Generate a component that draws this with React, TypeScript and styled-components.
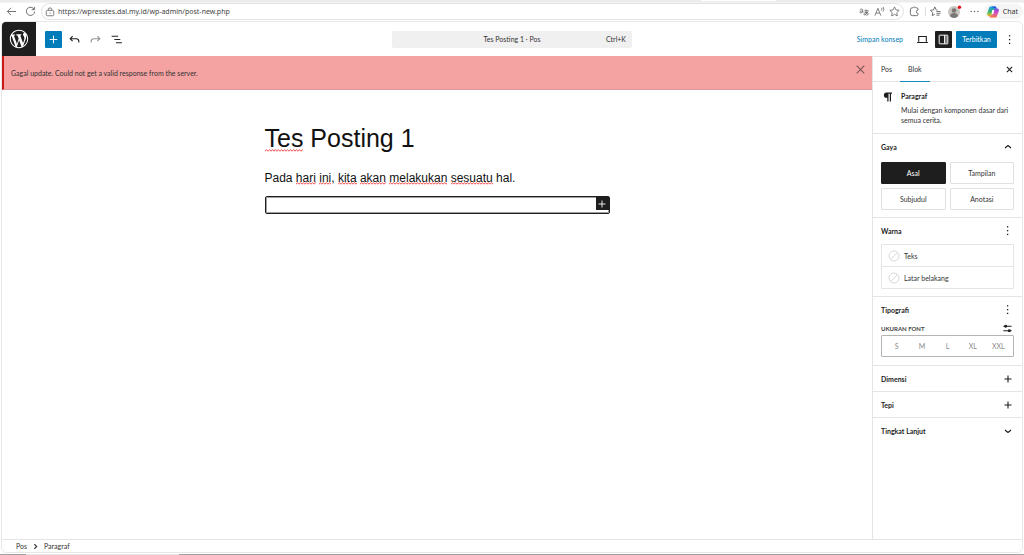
import React from "react";
import styled, { createGlobalStyle, css } from "styled-components";

const ink = "#1e1e1e";
const line = "#e4e4e4";
const blue = "#007cba";
const squiggle =
  "data:image/svg+xml,%3Csvg xmlns='http://www.w3.org/2000/svg' width='3' height='3' viewBox='0 0 3 3'%3E%3Cpath d='M-.5 2.800L1.500.6 3.500 2.800' fill='none' stroke='%23f03c3c' stroke-width='.9'/%3E%3C/svg%3E";

const GlobalStyle = createGlobalStyle`
  *, *::before, *::after { box-sizing: border-box; }
  html, body { margin: 0; padding: 0; background: #fff; }
  body { font: 7px/10px Lato, "Open Sans", sans-serif; color: ${ink}; }
  button, input { font: inherit; color: inherit; }
  button { border: 0; padding: 0; background: none; cursor: pointer; }
  h1, h2, h3, p, ul, ol { margin: 0; padding: 0; font-size: inherit; }
  svg { display: block; flex: none; }
`;

const Page = styled.div`
  min-height: 100vh;
  display: flex;
  flex-direction: column;
`;

/* Browser chrome */
const TabStrip = styled.div`
  display: flex;
  height: 3px;
  background: #ececec;
  border-bottom: 1px solid #f4f4f4;
`;
const ActiveTab = styled.div`
  flex: 0 0 75px;
  margin-left: 68.5%;
  height: 1px;
  background: #fff;
`;
const BrowserBar = styled.div`
  display: flex;
  align-items: center;
  height: 17px;
  padding: 0 1px 0 4px;
  font-family: "Noto Sans", "Open Sans", sans-serif;
`;
const BrowserButton = styled.button<{ $w?: number }>`
  width: ${(p) => p.$w ?? 15}px;
  height: 15px;
  display: flex;
  align-items: center;
  justify-content: center;
  flex: none;
  color: #666;
`;
const AddressBar = styled.div`
  flex: 1;
  display: flex;
  align-items: center;
  height: 17px;
  margin-right: 3px;
  padding: 0 1px;
  border: 1px solid #e2e2e2;
  border-radius: 9px;
`;
const Address = styled.input`
  flex: 1;
  min-width: 0;
  height: 12px;
  border: 0;
  outline: 0;
  padding: 0 0 0 2px;
  background: none;
  color: #444;
`;
const Separator = styled.div`
  width: 1px;
  height: 9px;
  background: #ddd;
  margin: 0 2px 0 3px;
`;
const ChatButton = styled.button`
  display: flex;
  align-items: center;
  gap: 4px;
  height: 15px;
  margin-left: 2px;
  padding: 0 5px 0 3px;
  border-radius: 8px;
  background: #f5f5f5;
  color: #333;
`;

/* Editor frame */
const Frame = styled.div`
  flex: 1;
  display: flex;
  flex-direction: column;
  margin: 1px;
  border: 1px solid #e8e8e8;
  border-radius: 5px;
  overflow: hidden;
`;
const Header = styled.header`
  display: grid;
  grid-template-columns: 1fr 240px 1fr;
  align-items: center;
  height: 34px;
`;
const HeaderSide = styled.div<{ $end?: boolean }>`
  display: flex;
  align-items: center;
  justify-content: ${(p) => (p.$end ? "flex-end" : "flex-start")};
  gap: 4px;
  padding-right: ${(p) => (p.$end ? 4 : 0)}px;
`;
const Logo = styled.a`
  width: 34px;
  height: 34px;
  display: flex;
  align-items: center;
  justify-content: center;
  margin-right: 5px;
  background: ${ink};
  color: #fff;
`;
const ToolButton = styled.button<{ $tone?: "primary" | "dark" | "muted" }>`
  width: 17px;
  height: 17px;
  display: flex;
  align-items: center;
  justify-content: center;
  flex: none;
  border-radius: 1px;
  ${(p) => p.$tone === "primary" && css`background: ${blue}; color: #fff;`}
  ${(p) => p.$tone === "dark" && css`background: ${ink}; color: #fff;`}
  ${(p) => p.$tone === "muted" && css`color: #949494;`}
`;
const DocumentBar = styled.button`
  display: grid;
  grid-template-columns: 1fr auto 1fr;
  align-items: center;
  height: 17px;
  padding: 0 6px;
  border-radius: 2px;
  background: #f0f0f0;
  color: #333;
`;
const DocTitle = styled.span`
  grid-column: 2;
`;
const Shortcut = styled.span`
  text-align: right;
`;
const TextButton = styled.button`
  color: ${blue};
  margin-right: 7px;
`;
const PublishButton = styled.button`
  height: 17px;
  min-width: 41px;
  padding: 0 6px;
  border-radius: 1px;
  background: ${blue};
  color: #fff;
`;

const Body = styled.div`
  flex: 1;
  display: flex;
`;
const Main = styled.main`
  flex: 1;
  min-width: 0;
`;
const Notice = styled.div`
  display: flex;
  align-items: flex-start;
  justify-content: space-between;
  height: 34px;
  padding: 5px 4px 0 7px;
  border-left: 2px solid #cc1818;
  border-bottom: 1px solid #dc9a9c;
  background: #f4a2a2;
  color: #333;
`;
const NoticeText = styled.p`
  padding-top: 7px;
`;
const NoticeClose = styled.button`
  width: 16px;
  height: 16px;
  display: flex;
  align-items: center;
  justify-content: center;
  color: #7a5555;
`;
const Canvas = styled.div`
  width: 345px;
  max-width: 100%;
  margin: 0 auto;
  padding-top: 33px;
  font-family: "Liberation Sans", Arial, sans-serif;
  color: #111;
`;
const PostTitle = styled.h1`
  font-size: 25px;
  line-height: 30px;
  font-weight: 400;
`;
const Paragraph = styled.p`
  margin-top: 16px;
  font-size: 12px;
  line-height: 18px;
`;
const Misspelled = styled.span`
  background: url("${squiggle}") repeat-x 0 100%;
`;
const EmptyBlock = styled.div`
  display: flex;
  justify-content: flex-end;
  height: 18px;
  margin-top: 9px;
  border: 1px solid ${ink};
  box-shadow: inset 0 0 0 1px #a0a0a0;
  border-radius: 2px;
`;
const Inserter = styled.button`
  width: 13px;
  height: 13px;
  display: flex;
  align-items: center;
  justify-content: center;
  background: ${ink};
  color: #fff;
`;

/* Settings sidebar */
const Sidebar = styled.aside`
  flex: 0 0 150px;
  border-left: 1px solid ${line};
  border-top: 1px solid ${line};
`;
const Tabs = styled.div`
  display: flex;
  align-items: center;
  height: 25px;
  border-bottom: 1px solid ${line};
`;
const Tab = styled.button<{ $active?: boolean }>`
  align-self: flex-start;
  flex: none;
  height: 25px;
  padding: 0 8px;
  border-bottom: 1px solid ${(p) => (p.$active ? "#1a8ac4" : "transparent")};
  color: #333;
`;
const TabClose = styled.button`
  margin-left: auto;
  padding: 4px;
  margin-right: 4px;
`;
const Card = styled.section`
  display: flex;
  gap: 7px;
  height: 51px;
  padding: 9px 8px 0 9px;
`;
const CardTitle = styled.h2`
  font-weight: 700;
  margin-bottom: 4px;
`;
const CardText = styled.p`
  color: #333;
`;
const Panel = styled.section<{ $bottom?: number }>`
  border-top: 1px solid ${line};
  padding: 0 8px ${(p) => p.$bottom ?? 0}px;
`;
const PanelHead = styled.div`
  display: flex;
  align-items: center;
  justify-content: space-between;
  height: 25px;
`;
const PanelTitle = styled.h2`
  font-weight: 700;
  padding-top: 1px;
`;
const PanelButton = styled.button`
  width: 13px;
  height: 13px;
  display: flex;
  align-items: center;
  justify-content: center;
`;
const StyleGrid = styled.div`
  display: grid;
  grid-template-columns: 1fr 1fr;
  gap: 4px;
  padding-top: 3px;
`;
const StyleButton = styled.button<{ $active?: boolean }>`
  height: 22px;
  border: 1px solid ${(p) => (p.$active ? ink : "#e0e0e0")};
  border-radius: 1px;
  background: ${(p) => (p.$active ? ink : "#fff")};
  color: ${(p) => (p.$active ? "#fff" : "#333")};
`;
const ColorList = styled.div`
  margin-top: 1px;
  border: 1px solid ${line};
  border-radius: 1px;
`;
const ColorRow = styled.button`
  display: flex;
  align-items: center;
  gap: 4px;
  width: 100%;
  height: 21px;
  padding: 0 6px;
  color: #333;
  & + & { height: 22px; border-top: 1px solid ${line}; }
`;
const SubHead = styled.div`
  display: flex;
  align-items: center;
  justify-content: space-between;
  height: 13px;
`;
const SubTitle = styled.h3`
  font-size: 6px;
  font-weight: 700;
  color: #444;
`;
const SizeGroup = styled.div`
  display: grid;
  grid-template-columns: repeat(5, 1fr);
  height: 22px;
  padding: 0 2px;
  border: 1px solid #b4b4b4;
  border-radius: 1px;
`;
const SizeButton = styled.button`
  color: #8a8a8a;
`;

const Footer = styled.footer`
  height: 13px;
  padding: 0 14px;
  border-top: 1px solid ${line};
`;
const Crumbs = styled.ol`
  display: flex;
  align-items: center;
  gap: 5px;
  height: 12px;
  list-style: none;
  color: #333;
`;
const CrumbItem = styled.li`
  display: flex;
  align-items: center;
  gap: 5px;
`;
const Taskbar = styled.div`
  height: 1px;
  background: linear-gradient(90deg, #a0a0a0 0 26px, #e6e6e6 26px 179px, #a0a0a0 179px);
`;

type IconProps = { size: number; children: React.ReactNode; w?: number };
const Icon = ({ size, w = 1.5, children }: IconProps) => (
  <svg width={size} height={size} viewBox="0 0 24 24" fill="none" stroke="currentColor" strokeWidth={w} aria-hidden="true">
    {children}
  </svg>
);

const Plus = ({ size = 13, w = 1.8 }: { size?: number; w?: number }) => (
  <Icon size={size} w={w}><path d="M12 5v14M5 12h14" /></Icon>
);
const Dots = () => (
  <Icon size={13}>
    <g fill="currentColor" stroke="none">
      <rect x="11" y="4" width="2.4" height="2.4" /><rect x="11" y="11" width="2.4" height="2.4" /><rect x="11" y="18" width="2.4" height="2.4" />
    </g>
  </Icon>
);

const WordPressLogo = () => (
  <svg width="22" height="22" viewBox="-2 -2 24 24" fill="currentColor" aria-hidden="true">
    <path d="M20 10c0-5.51-4.49-10-10-10C4.48 0 0 4.49 0 10c0 5.52 4.48 10 10 10 5.51 0 10-4.48 10-10zM7.78 15.37L4.37 6.22c.55-.02 1.17-.08 1.17-.08.5-.06.44-1.13-.06-1.11 0 0-1.45.11-2.37.11-.18 0-.37 0-.58-.01C4.12 2.69 6.87 1.11 10 1.11c2.33 0 4.45.87 6.05 2.34-.68-.11-1.65.39-1.65 1.58 0 .74.45 1.36.9 2.1.35.61.55 1.36.55 2.46 0 1.49-1.4 5-1.4 5l-3.03-8.37c.54-.02.82-.17.82-.17.5-.05.44-1.25-.06-1.22 0 0-1.44.12-2.38.12-.87 0-2.33-.12-2.33-.12-.5-.03-.56 1.2-.06 1.22l.92.08 1.26 3.41zM17.41 10c.24-.64.74-1.87.43-4.25.7 1.29 1.05 2.71 1.05 4.25 0 3.29-1.73 6.24-4.4 7.78.97-2.59 1.94-5.2 2.92-7.78zM6.1 18.09C3.12 16.65 1.11 13.53 1.11 10c0-1.3.23-2.48.72-3.59C3.25 10.3 4.67 14.2 6.1 18.09zm4.03-6.63l2.58 6.98c-.86.29-1.76.45-2.71.45-.79 0-1.57-.11-2.29-.33.81-2.38 1.62-4.74 2.42-7.1z" />
  </svg>
);

const CopilotLogo = () => (
  <svg width="12" height="12" viewBox="0 0 24 24" aria-hidden="true">
    <defs>
      <linearGradient id="cl" x1="0" y1="0" x2="0" y2="1"><stop offset="0" stopColor="#1b9df0" /><stop offset=".55" stopColor="#35b56a" /><stop offset="1" stopColor="#f4c020" /></linearGradient>
      <linearGradient id="cr" x1="0" y1="0" x2="0" y2="1"><stop offset="0" stopColor="#7a4be8" /><stop offset=".5" stopColor="#d64fc0" /><stop offset="1" stopColor="#fa7a3c" /></linearGradient>
    </defs>
    <path d="M8 1h8c2 0 2.600 1 3.100 2.600L20 7h-4c-2 0-2.600 1-3.200 3l-2 7c-.6 2-1.600 3-3.400 3H4c-3 0-4.300-2-3.600-5L4 4c.7-2 2-3 4-3z" fill="url(#cl)" />
    <path d="M16 23H8c-2 0-2.600-1-3.100-2.600L4.500 19H8c2 0 2.800-1 3.400-3l2-7c.6-2 1.400-4 3.200-4H20c3 0 4.300 2 3.600 5L20 20c-.7 2-2 3-4 3z" fill="url(#cr)" />
    <path d="M10.500 8h4l-1.800 8H9z" fill="#fff" />
    <path d="M8 1h7c2 0 3 1 3.500 3H14c-2 0-3-3-6-3z" fill="#2450d8" />
  </svg>
);

const Swatch = () => (
  <svg width="12" height="12" viewBox="0 0 12 12" fill="#fff" stroke="#d8d8d8" aria-hidden="true">
    <circle cx="6" cy="6" r="5" /><path d="M2.500 9.500l7-7" />
  </svg>
);

const closedPanels = ["Dimensi", "Tepi"];
const sizes = ["S", "M", "L", "XL", "XXL"];
const styles = ["Asal", "Tampilan", "Subjudul", "Anotasi"];

export default function App() {
  return (
    <Page>
      <GlobalStyle />
      <TabStrip><ActiveTab /></TabStrip>
      <BrowserBar>
        <BrowserButton aria-label="Back">
          <Icon size={11} w={2}><path d="M22 12H3M11 4l-8 8 8 8" /></Icon>
        </BrowserButton>
        <BrowserButton $w={22} aria-label="Refresh">
          <Icon size={11} w={2}><path d="M20 7.500A9 9 0 1 0 21 12M20.500 2v6h-6" /></Icon>
        </BrowserButton>
        <AddressBar>
          <BrowserButton $w={13} aria-label="Site information">
            <Icon size={10} w={2}><rect x="3" y="8" width="18" height="13" rx="3" /><path d="M8 8V6a4 4 0 0 1 8 0v2M12 13v3" /></Icon>
          </BrowserButton>
          <Address aria-label="Address" defaultValue="https://wpresstes.dal.my.id/wp-admin/post-new.php" />
          <BrowserButton aria-label="Translate">
            <svg width="10" height="10" viewBox="0 0 24 24" fill="none" stroke="currentColor" strokeWidth="2">
              <path d="M2 7c2-3 7-3 7 1v6M9 10c-4-1-7 0-7 2.200 0 2.800 5 2.300 7-.7M13 9h10M17 6v10c-3 5-6 3-5 0 1.500-4 11-4 10 1-.3 2-2 3-4 3M21 11c-1 4-4 7-7 8" />
            </svg>
          </BrowserButton>
          <BrowserButton aria-label="Read aloud">
            <Icon size={11} w={1.8}><path d="M2 21l6.500-16L15 21M4.500 15.500h8M16 4c1.500 1.500 1.500 4 0 6M19.500 2c2.500 3 2.500 7 0 10" /></Icon>
          </BrowserButton>
          <BrowserButton aria-label="Favorite">
            <Icon size={11} w={1.8}><path d="M12 2l3.100 6.500 7 1-5.100 5 1.200 7.100L12 18.200l-6.200 3.400L7 14.500l-5.100-5 7-1z" /></Icon>
          </BrowserButton>
        </AddressBar>
        <BrowserButton aria-label="Extensions">
          <Icon size={11} w={2}><path d="M19.500 9V6.500A2.500 2.500 0 0 0 17 4h-2.500a3 3 0 0 0-5.500 0H7a4 4 0 0 0-4 4v9a4 4 0 0 0 4 4h10a2.500 2.500 0 0 0 2.500-2.500V16a3.500 3.500 0 1 1 0-7z" /></Icon>
        </BrowserButton>
        <Separator />
        <BrowserButton aria-label="Favorites">
          <Icon size={11} w={2}><path d="M16 9l-2.500-.5L10.500 2l-3 6.500-6.500 1 5 5L5 21l5.500-3M14 12h9M14 16h9M14 20h7" /></Icon>
        </BrowserButton>
        <BrowserButton $w={24} aria-label="Profile">
          <svg width="14" height="13" viewBox="0 0 14 13">
            <circle cx="6" cy="7" r="6" fill="#c9c5c1" /><circle cx="6" cy="5.500" r="2.300" fill="#7c7875" />
            <path d="M2 11c0-4 8-4 8 0-2 2.500-6 2.500-8 0z" fill="#7c7875" /><circle cx="11.500" cy="2.300" r="1.700" fill="#e8111c" />
          </svg>
        </BrowserButton>
        <BrowserButton aria-label="More">
          <Icon size={9}><g fill="currentColor" stroke="none"><circle cx="3" cy="12" r="2" /><circle cx="12" cy="12" r="2" /><circle cx="21" cy="12" r="2" /></g></Icon>
        </BrowserButton>
        <ChatButton><CopilotLogo />Chat</ChatButton>
      </BrowserBar>

      <Frame>
        <Header>
          <HeaderSide>
            <Logo href="#" aria-label="WordPress"><WordPressLogo /></Logo>
            <ToolButton $tone="primary" aria-label="Tambah blok"><Plus /></ToolButton>
            <ToolButton aria-label="Urungkan">
              <Icon size={13} w={2}><path d="M8.500 6l-4.500 4.500 4.500 4.500M4 10.500h11c3 0 5 2 5 4.500v2.500" /></Icon>
            </ToolButton>
            <ToolButton $tone="muted" aria-label="Ulangi">
              <Icon size={13} w={2}><path d="M15.500 6l4.500 4.500-4.500 4.500M20 10.500H9c-3 0-5 2-5 4.500v2.500" /></Icon>
            </ToolButton>
            <ToolButton aria-label="Ikhtisar dokumen">
              <Icon size={13} w={1.8}><path d="M3 6h12M8 12h11M11 18h11" /></Icon>
            </ToolButton>
          </HeaderSide>
          <DocumentBar>
            <DocTitle>Tes Posting 1 · Pos</DocTitle>
            <Shortcut>Ctrl+K</Shortcut>
          </DocumentBar>
          <HeaderSide $end>
            <TextButton>Simpan konsep</TextButton>
            <ToolButton aria-label="Tampilan">
              <Icon size={13} w={2}><path d="M5 16V6.500h14V16M2 17.500h20" /></Icon>
            </ToolButton>
            <ToolButton $tone="dark" aria-label="Pengaturan">
              <Icon size={13} w={1.8}><rect x="4" y="4" width="16" height="16" rx="1" /><path d="M14 4v16" /><rect x="15" y="5" width="4" height="14" fill="currentColor" stroke="none" opacity=".45" /></Icon>
            </ToolButton>
            <PublishButton>Terbitkan</PublishButton>
            <ToolButton aria-label="Opsi"><Dots /></ToolButton>
          </HeaderSide>
        </Header>

        <Body>
          <Main>
            <Notice role="alert">
              <NoticeText>Gagal update. Could not get a valid response from the server.</NoticeText>
              <NoticeClose aria-label="Tutup"><Icon size={13} w={2}><path d="M5 5l14 14M19 5L5 19" /></Icon></NoticeClose>
            </Notice>
            <Canvas>
              <PostTitle><Misspelled>Tes</Misspelled> Posting 1</PostTitle>
              <Paragraph>
                Pada <Misspelled>hari</Misspelled> <Misspelled>ini</Misspelled>, <Misspelled>kita</Misspelled>{" "}
                <Misspelled>akan</Misspelled> <Misspelled>melakukan</Misspelled> <Misspelled>sesuatu</Misspelled> hal.
              </Paragraph>
              <EmptyBlock>
                <Inserter aria-label="Tambahkan blok"><Plus size={12} /></Inserter>
              </EmptyBlock>
            </Canvas>
          </Main>

          <Sidebar>
            <Tabs>
              <Tab>Pos</Tab>
              <Tab $active>Blok</Tab>
              <TabClose aria-label="Tutup pengaturan"><Icon size={9} w={3}><path d="M5 5l14 14M19 5L5 19" /></Icon></TabClose>
            </Tabs>
            <Card>
              <svg width="12" height="12" viewBox="0 0 24 24" fill="currentColor" aria-hidden="true">
                <path d="M9 3h11v2.500h-2V21h-2.500V5.500H13V21h-2.500v-7.500H9A5 5 0 0 1 9 3z" />
              </svg>
              <div>
                <CardTitle>Paragraf</CardTitle>
                <CardText>Mulai dengan komponen dasar dari semua cerita.</CardText>
              </div>
            </Card>
            <Panel $bottom={7}>
              <PanelHead>
                <PanelTitle>Gaya</PanelTitle>
                <PanelButton aria-label="Ciutkan"><Icon size={12} w={2.4}><path d="M6 14l6-5 6 5" /></Icon></PanelButton>
              </PanelHead>
              <StyleGrid>
                {styles.map((s, i) => <StyleButton key={s} $active={i === 0}>{s}</StyleButton>)}
              </StyleGrid>
            </Panel>
            <Panel $bottom={7}>
              <PanelHead>
                <PanelTitle>Warna</PanelTitle>
                <PanelButton aria-label="Opsi warna"><Dots /></PanelButton>
              </PanelHead>
              <ColorList>
                <ColorRow><Swatch />Teks</ColorRow>
                <ColorRow><Swatch />Latar belakang</ColorRow>
              </ColorList>
            </Panel>
            <Panel $bottom={8}>
              <PanelHead>
                <PanelTitle>Tipografi</PanelTitle>
                <PanelButton aria-label="Opsi tipografi"><Dots /></PanelButton>
              </PanelHead>
              <SubHead>
                <SubTitle>UKURAN FONT</SubTitle>
                <PanelButton aria-label="Ukuran khusus">
                  <Icon size={11} w={2.4}><path d="M3 7h18M3 17h18" /><circle cx="8" cy="7" r="2" fill="currentColor" /><circle cx="16" cy="17" r="2" fill="currentColor" /></Icon>
                </PanelButton>
              </SubHead>
              <SizeGroup>
                {sizes.map((s) => <SizeButton key={s}>{s}</SizeButton>)}
              </SizeGroup>
            </Panel>
            {closedPanels.map((p) => (
              <Panel key={p}>
                <PanelHead>
                  <PanelTitle>{p}</PanelTitle>
                  <PanelButton aria-label={"Buka " + p}><Plus size={12} w={2.2} /></PanelButton>
                </PanelHead>
              </Panel>
            ))}
            <Panel>
              <PanelHead>
                <PanelTitle>Tingkat Lanjut</PanelTitle>
                <PanelButton aria-label="Buka Tingkat Lanjut"><Icon size={12} w={2.4}><path d="M6 10l6 5 6-5" /></Icon></PanelButton>
              </PanelHead>
            </Panel>
          </Sidebar>
        </Body>

        <Footer>
          <Crumbs>
            <CrumbItem>Pos <Icon size={7} w={4}><path d="M8 4l8 8-8 8" /></Icon></CrumbItem>
            <CrumbItem>Paragraf</CrumbItem>
          </Crumbs>
        </Footer>
      </Frame>
      <Taskbar />
    </Page>
  );
}
